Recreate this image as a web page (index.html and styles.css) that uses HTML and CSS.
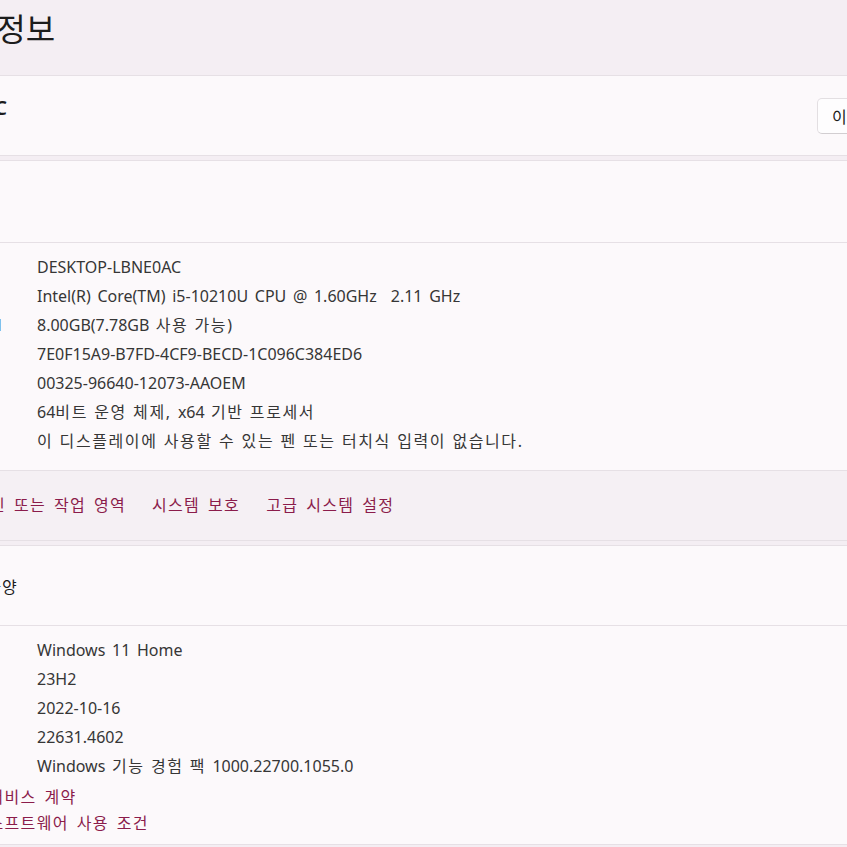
FILE: index.html
```html
<!DOCTYPE html>
<html lang="ko">
<head>
<meta charset="utf-8">
<title>정보</title>
<link rel="stylesheet" href="styles.css">
</head>
<body>
<div class="page">
  <header class="title-bar">
    <h1 class="title">
      <span class="crumb">시스템</span>
      <svg class="chev" viewBox="0 0 16 16" width="16" height="16"><path d="M5 2l6 6-6 6" fill="none" stroke="#1b1b1b" stroke-width="1.4"/></svg>
      <span class="crumb">정보</span>
    </h1>
  </header>

  <section class="card device-card">
    <div class="device">
      <div class="device-name">DESKTOP-LBNE0AC</div>
    </div>
    <button class="btn"><span class="ko">이름 바꾸기</span></button>
  </section>

  <section class="card spec">
    <div class="card-head"><span class="ko">장치 사양</span></div>
    <div class="details">
      <div class="row"><div class="label ko">장치 이름</div><div class="value">DESKTOP-LBNE0AC</div></div>
      <div class="row"><div class="label ko">프로세서</div><div class="value">Intel(R) Core(TM) i5-10210U CPU @ 1.60GHz<span class="tab">2.11 GHz</span></div></div>
      <div class="row"><div class="label"><span class="ko">설치된 </span>RAM</div><div class="value">8.00GB(7.78GB<span class="ko"> 사용 가능</span>)</div></div>
      <div class="row"><div class="label"><span class="ko">장치 </span>ID</div><div class="value">7E0F15A9-B7FD-4CF9-BECD-1C096C384ED6</div></div>
      <div class="row"><div class="label"><span class="ko">제품 </span>ID</div><div class="value">00325-96640-12073-AAOEM</div></div>
      <div class="row"><div class="label ko">시스템 종류</div><div class="value">64<span class="ko">비트 운영 체제, </span>x64<span class="ko"> 기반 프로세서</span></div></div>
      <div class="row"><div class="label ko">펜 및 터치</div><div class="value ko">이 디스플레이에 사용할 수 있는 펜 또는 터치식 입력이 없습니다.</div></div>
    </div>
    <div class="related">
      <span class="related-label ko">관련 링크</span>
      <a class="link ko" href="#">도메인 또는 작업 영역</a>
      <a class="link ko" href="#">시스템 보호</a>
      <a class="link ko" href="#">고급 시스템 설정</a>
    </div>
  </section>

  <section class="card spec">
    <div class="card-head head-win">Windows <span class="ko">사양</span></div>
    <div class="details">
      <div class="row"><div class="label ko">에디션</div><div class="value">Windows 11 Home</div></div>
      <div class="row"><div class="label ko">버전</div><div class="value">23H2</div></div>
      <div class="row"><div class="label ko">설치 날짜</div><div class="value">2022-10-16</div></div>
      <div class="row"><div class="label">OS <span class="ko">빌드</span></div><div class="value">22631.4602</div></div>
      <div class="row"><div class="label ko">경험</div><div class="value">Windows <span class="ko">기능 경험 팩 </span>1000.22700.1055.0</div></div>
      <div class="links">
        <a class="link" href="#">Microsoft <span class="ko">서비스 계약</span></a>
        <a class="link" href="#">Microsoft <span class="ko">소프트웨어 사용 조건</span></a>
      </div>
    </div>
  </section>
</div>
</body>
</html>
```
FILE: styles.css
```css
* { box-sizing: border-box; }
html, body { margin: 0; padding: 0; }
body {
  width: 847px;
  height: 847px;
  overflow: hidden;
  background: #f4eef3;
  font-family: "Noto Sans", "Noto Sans CJK KR", sans-serif;
  font-size: 16px;
  word-spacing: 2.5px;
  color: #1c1c1c;
}
.ko { letter-spacing: 1.3px; }
.value .ko, .value.ko { letter-spacing: 1.6px; word-spacing: 0.5px; }
.page {
  width: 1082px;
  margin-left: -138px;
}
.title-bar {
  height: 75px;
  padding-top: 7px;
}
.title {
  margin: 0;
  font-weight: 400;
  font-size: 32px;
  line-height: 44px;
  display: flex;
  align-items: center;
  gap: 15px;
  word-spacing: 0;
}
.chev { flex: none; }

.card {
  background: #fcf9fb;
  border: 1px solid #e6e0e5;
  border-radius: 6px;
}
.device-card {
  height: 81px;
  display: flex;
  align-items: center;
  justify-content: space-between;
  padding: 0 16px 0 17px;
}
.device {
  width: 127px;
  display: flex;
  justify-content: flex-end;
  padding-bottom: 16px;
}
.device-name {
  white-space: nowrap;
  font-size: 20px;
  font-weight: 600;
  word-spacing: 0;
}
.btn {
  width: 110px;
  height: 36px;
  padding: 0 0 0 14px;
  text-align: left;
  font: inherit;
  font-size: 16px;
  color: #1b1b1b;
  background: #fefdfe;
  border: 1px solid #e3dfe2;
  border-bottom-color: #d2ced1;
  border-radius: 5px;
}

.spec { margin-top: 4px; }
.card-head {
  height: 82px;
  display: flex;
  align-items: center;
  padding-left: 48px;
  border-bottom: 1px solid #e6e0e5;
  white-space: pre;
}
.head-win { height: 80px; }

.details {
  padding: 10px 0 14px 48px;
  border-bottom: 1px solid #e6e0e5;
  color: #363636;
}
.spec:last-child .details { border-bottom: 0; padding-bottom: 8px; }
.row {
  display: grid;
  grid-template-columns: 126px 1fr;
  line-height: 29px;
  white-space: pre;
}
.label { color: #1c1c1c; }
.tab { margin-left: 14px; }

.related {
  height: 69px;
  display: flex;
  align-items: center;
  padding: 0 0 4px 17px;
  background: #f5f0f4;
  border-radius: 0 0 6px 6px;
  white-space: nowrap;
}
.related-label { width: 78px; overflow: hidden; flex: none; }
.related .link { margin-right: 26px; }

.link {
  color: #8b1c4b;
  text-decoration: none;
}
.links {
  display: flex;
  flex-direction: column;
  margin-top: 3px;
  line-height: 26px;
  white-space: pre;
}
```
